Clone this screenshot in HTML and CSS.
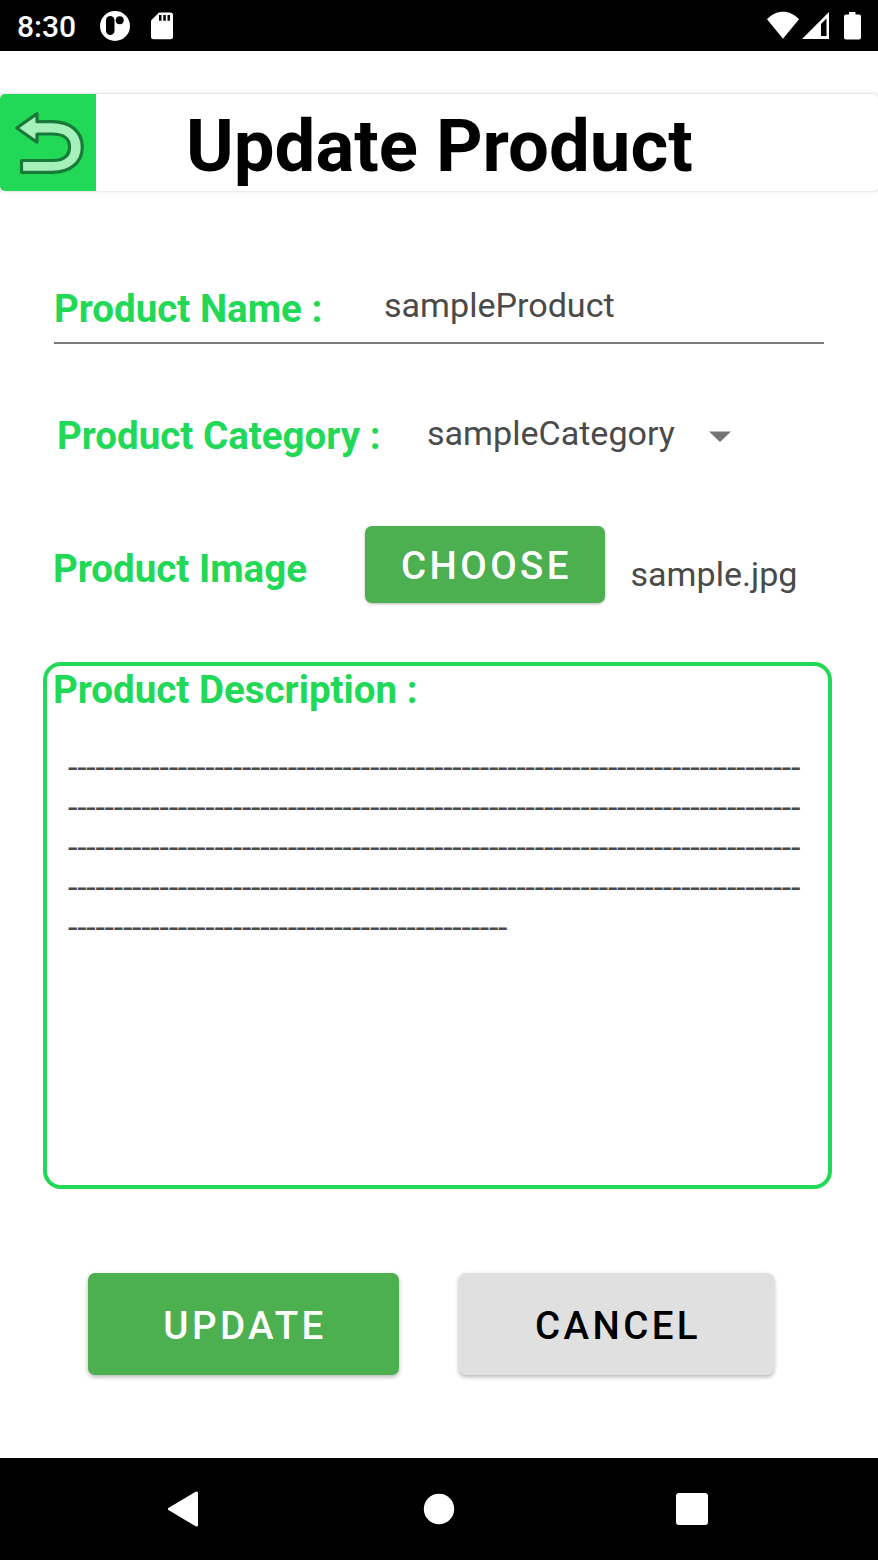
FILE: index.html
```html
<!DOCTYPE html>
<html lang="en">
<head>
<meta charset="utf-8">
<title>Update Product</title>
<link rel="stylesheet" href="styles.css">
</head>
<body>
<div class="screen">
  <header class="status-bar">
    <span class="clock">8:30</span>
    <svg class="status-left" width="80" height="51" viewBox="0 0 80 51">
      <circle cx="15" cy="26" r="15" fill="#fff"/>
      <rect x="6" y="16" width="8.500" height="19" rx="4.250" fill="#000"/>
      <circle cx="19.700" cy="20.300" r="4" fill="#000"/>
      <path d="M59 12.500h11.500a2.500 2.500 0 0 1 2.500 2.500v21.800a2.500 2.500 0 0 1-2.500 2.500h-17a2.500 2.500 0 0 1-2.500-2.500V20.500z" fill="#fff"/>
      <path d="M59 15h2.500v5.700H59zM63.300 15h2.500v5.700h-2.500zM67.500 15H70v5.700h-2.500z" fill="#000"/>
    </svg>
    <svg class="status-right" width="98" height="51" viewBox="0 0 98 51">
      <path d="M0 19.300C9 9.300 23 9.300 32 19.300L16 38.700z" fill="#fff"/>
      <path d="M35 39L62 12v27z" fill="#fff"/>
      <path d="M54 24l5.500-5.500V36H54z" fill="#000"/>
      <path d="M82 12h6.500v2.500h3.500a2 2 0 0 1 2 2V37.500a2 2 0 0 1-2 2H79a2 2 0 0 1-2-2V16.500a2 2 0 0 1 2-2h3z" fill="#fff"/>
    </svg>
  </header>

  <main class="content">
    <div class="toolbar">
      <button class="back" aria-label="Back">
        <svg width="96" height="97" viewBox="0 0 96 97">
          <path d="M16.700 34L37 19.600V27.700H52C71 27.700 82.300 38 82.300 53S71 78.300 52 78.300H21.500V66.500H52C64 66.500 69.500 62 69.500 53S64 40 52 40H37V48.200z" fill="#a6f0bc" stroke="#187a38" stroke-width="3.200" stroke-linejoin="round"/>
        </svg>
      </button>
      <h1 class="title">Update Product</h1>
    </div>

    <div class="row name-row">
      <span class="label name-label">Product Name :</span>
      <span class="value name-value">sampleProduct</span>
    </div>

    <div class="row category-row">
      <span class="label category-label">Product Category :</span>
      <span class="value category-value">sampleCategory</span>
      <svg class="caret" width="22" height="12" viewBox="0 0 22 12"><path d="M0 .5h22L11 11z" fill="#757575"/></svg>
    </div>

    <div class="row image-row">
      <span class="label image-label">Product Image</span>
      <button class="btn choose">CHOOSE</button>
      <span class="value file-name">sample.jpg</span>
    </div>

    <section class="description">
      <div class="label description-label">Product Description :</div>
      <div class="value description-text">--------------------------------------------------------------------------------<br>--------------------------------------------------------------------------------<br>--------------------------------------------------------------------------------<br>--------------------------------------------------------------------------------<br>------------------------------------------------</div>
    </section>

    <div class="actions">
      <button class="btn update">UPDATE</button>
      <button class="btn cancel">CANCEL</button>
    </div>
  </main>

  <nav class="nav-bar">
    <svg width="878" height="102" viewBox="0 0 878 102">
      <path d="M169.500 51L196.500 35V67z" fill="#fff" stroke="#fff" stroke-width="3" stroke-linejoin="round"/>
      <circle cx="439" cy="51" r="15.200" fill="#fff"/>
      <rect x="676" y="35" width="32" height="32" rx="3" fill="#fff"/>
    </svg>
  </nav>
</div>
</body>
</html>
```

FILE: styles.css
```css
* { box-sizing: border-box; }
body { margin: 0; background: #fff; font-family: Roboto, sans-serif; }
button { border: 0; padding: 0; font-family: inherit; }
.screen { width: 878px; height: 1560px; display: flex; flex-direction: column; overflow: hidden; }

.status-bar { height: 51px; background: #000; display: flex; align-items: center; padding: 0 13px 0 17px; }
.clock { width: 83px; font-size: 30px; font-weight: 500; line-height: 36px; padding-top: 2px; color: #fff; }
.status-left { display: block; }
.status-right { display: block; margin-left: auto; }

.content { flex: 1; padding-top: 43px; }
.toolbar { display: flex; height: 97px; border-radius: 4px; background: #fff; box-shadow: 0 0 4px rgba(0,0,0,.14), 0 0 1px rgba(0,0,0,.25); }
.back { width: 96px; height: 97px; background: #21d957; border-radius: 5px 0 0 5px; }
.back svg { display: block; }
.title { margin: 4px 0 0 90px; font-size: 72.500px; line-height: 97px; font-weight: 700; color: #000; white-space: nowrap; }

.row { display: flex; align-items: flex-start; white-space: nowrap; }
.label { color: #21d957; font-size: 38.500px; font-weight: 700; line-height: 46px; white-space: nowrap; }
.value { color: #4a4a4a; font-size: 34.100px; line-height: 38px; white-space: nowrap; }

.name-row { margin: 95px 54px 0; height: 58px; border-bottom: 2px solid #7b7b7b; }
.name-label { width: 330px; }
.category-row { margin: 69px 54px 0 57px; height: 46px; }
.category-label { width: 370px; }
.category-value { width: 282px; padding-top: 1px; }
.caret { margin-top: 18px; }
.image-row { margin: 67px 54px 0 53px; height: 77px; }
.image-label { width: 312px; padding-top: 20px; }
.file-name { margin: 29px 0 0 25.500px; }

.btn { border-radius: 7px; background: #4caf50; color: #fff; font-size: 38.500px; font-weight: 500; letter-spacing: 3.400px; padding: 3px 0 0 3px; white-space: nowrap; box-shadow: 0 2px 4px rgba(0,0,0,.3); }
.choose { width: 240px; height: 77px; padding-top: 1px; box-shadow: 0 1px 3px rgba(0,0,0,.28); }

.description { width: 789px; height: 527px; margin: 59px 0 0 43px; border: 4.500px solid #21d957; border-radius: 18px; padding: 1px 0 0 6px; }
.description-text { margin: 34px 0 0 15px; font-size: 34px; line-height: 40.100px; letter-spacing: -.245px; }

.actions { display: flex; gap: 60px; margin: 84px 0 0 88px; }
.update { width: 311px; height: 102px; }
.cancel { width: 315px; height: 102px; background: #e0e0e0; color: #000; }

.nav-bar { height: 102px; background: #000; }
.nav-bar svg { display: block; }
```
